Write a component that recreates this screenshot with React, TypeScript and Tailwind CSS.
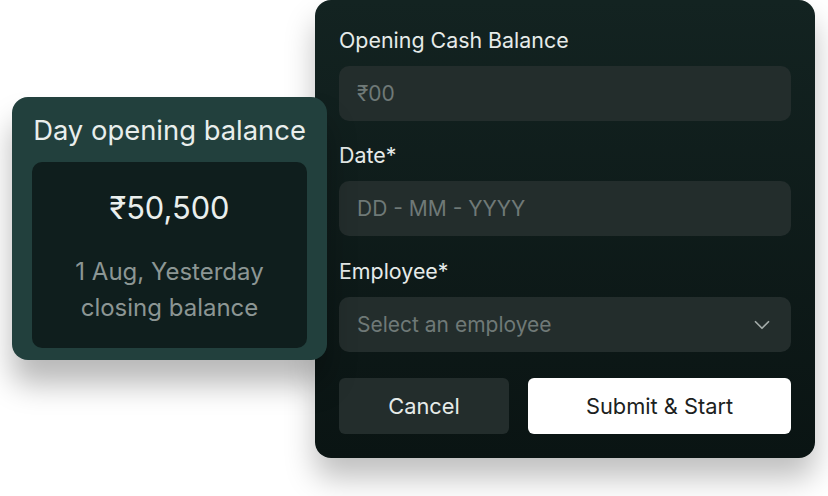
import { ChevronDown } from 'lucide-react';

const font = { fontFamily: 'Inter, "Noto Sans", sans-serif' };

function Field({ label, placeholder, select }: { label: string; placeholder: string; select?: boolean }) {
    return (
        <div className="flex flex-col">
            <div className="text-[21.4px] leading-[28px] text-[#e6ebe9]">{label}</div>
            <div className="mt-[12px] flex h-[55px] items-center justify-between rounded-[10px] bg-[#232d2c] pl-[18px] pr-[16px] text-[21px] text-[#6f7977]">
                <span>{placeholder}</span>
                {select && <ChevronDown className="h-[26px] w-[26px] text-[#a3aba9]" strokeWidth={1.6} />}
            </div>
        </div>
    );
}

export default function App() {
    return (
        <div className="relative h-[496px] w-[828px] overflow-hidden bg-white" style={font}>
            <div className="ml-[315px] flex h-[458px] w-[500px] flex-col rounded-[16px] bg-gradient-to-b from-[#132321] to-[#0a1413] px-[24px] pt-[26px] shadow-[0_20px_30px_rgba(0,0,0,0.25)]">
                <Field label="Opening Cash Balance" placeholder="₹00" />
                <div className="mt-[20px]">
                    <Field label="Date*" placeholder="DD - MM - YYYY" />
                </div>
                <div className="mt-[21px]">
                    <Field label="Employee*" placeholder="Select an employee" select />
                </div>
                <div className="mt-[26px] flex gap-[19px]">
                    <button className="h-[56px] w-[170px] rounded-[6px] bg-[#232d2c] text-[21.8px] text-[#e6ebe9]">Cancel</button>
                    <button className="h-[56px] flex-1 rounded-[6px] bg-white text-[21.8px] text-[#1b2120]">Submit &amp; Start</button>
                </div>
            </div>

            <div className="absolute left-[12px] top-[97px] flex h-[263px] w-[315px] flex-col rounded-[16px] bg-[#22403d] px-[20px] pb-[12px] shadow-[0_24px_30px_rgba(0,0,0,0.28)]">
                <div className="pt-[16px] text-center text-[27.4px] leading-[34px] text-[#e9eeec]">Day opening balance</div>
                <div className="mt-[15px] flex flex-1 flex-col items-center rounded-[10px] bg-[#0f1e1d] pt-[26px]">
                    <div className="text-[30.8px] leading-[40px] text-[#eaefed]">₹50,500</div>
                    <div className="mt-[26px] text-center text-[24px] leading-[36px] text-[#8c9694]">
                        1 Aug, Yesterday
                        <br />
                        closing balance
                    </div>
                </div>
            </div>
        </div>
    );
}
